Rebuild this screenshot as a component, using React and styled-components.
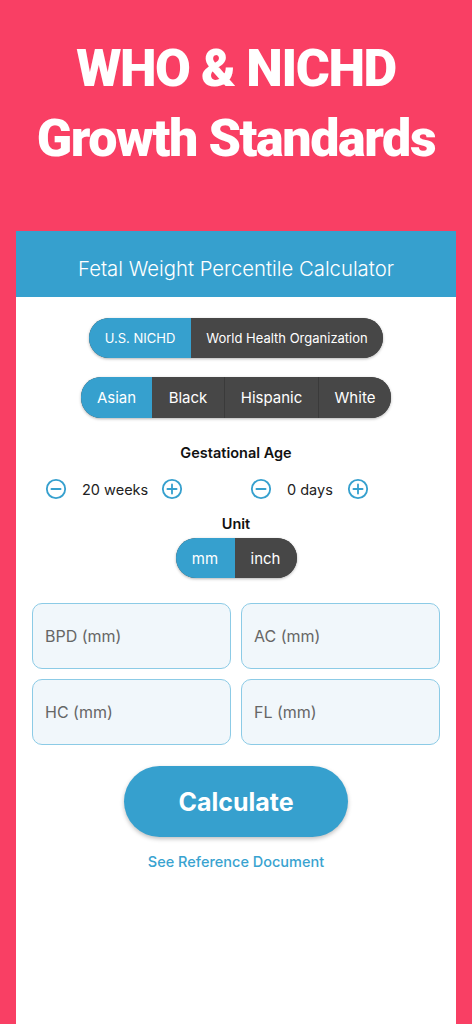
import React from "react";
import styled, { createGlobalStyle } from "styled-components";

const GlobalStyle = createGlobalStyle`
  html, body {
    margin: 0;
    padding: 0;
    background: #f93f64;
  }
  body {
    font-family: Inter, "Noto Sans", sans-serif;
  }
`;

const Page = styled.div`
  min-height: 1024px;
  background: #f93f64;
  display: flex;
  flex-direction: column;
  align-items: center;
  overflow: hidden;
`;

const Hero = styled.h1`
  margin: 34px 0 0;
  height: 197px;
  color: #fff;
  font-family: Roboto, "Liberation Sans", sans-serif;
  font-weight: 900;
  font-size: 52px;
  line-height: 70px;
  letter-spacing: -1.4px;
  text-align: center;
`;

const Card = styled.main`
  width: 440px;
  flex: 1;
  background: #fff;
  display: flex;
  flex-direction: column;
  align-items: center;
`;

const CardHeader = styled.header`
  align-self: stretch;
  box-sizing: border-box;
  height: 66px;
  padding-top: 9px;
  background: #36a0ce;
  color: #fff;
  font-weight: 300;
  font-size: 20.3px;
  display: flex;
  align-items: center;
  justify-content: center;
`;

const Segments = styled.div`
  display: flex;
  height: ${(p) => p.$height || 40}px;
  margin-top: ${(p) => p.$top || 0}px;
  border-radius: 20px;
  overflow: hidden;
  background: #474747;
  box-shadow: 0 1px 3px rgba(0, 0, 0, 0.3);
`;

const Segment = styled.div`
  width: ${(p) => p.$w}px;
  display: flex;
  align-items: center;
  justify-content: center;
  color: #fff;
  font-size: ${(p) => p.$size || 15}px;
  background: ${(p) => (p.$active ? "#36a0ce" : "#474747")};
  border-left: ${(p) => (p.$divider ? "1px solid #3a3a3a" : "none")};
  box-sizing: border-box;
`;

const Label = styled.div`
  margin-top: ${(p) => p.$top}px;
  font-weight: 600;
  font-size: 14.5px;
  color: #111;
  line-height: 18px;
`;

const StepperRow = styled.div`
  align-self: stretch;
  display: flex;
  margin-top: 17px;
  padding-left: 29px;
  gap: 67px;
`;

const Stepper = styled.div`
  display: flex;
  align-items: center;
  gap: 15px;
  height: 20px;
`;

const StepValue = styled.span`
  width: ${(p) => p.$w}px;
  font-size: 14.5px;
  color: #222;
  text-align: center;
  white-space: nowrap;
`;

const IconButton = styled.svg`
  width: 22px;
  height: 22px;
  display: block;
`;

const Fields = styled.div`
  align-self: stretch;
  display: grid;
  grid-template-columns: 1fr 1fr;
  gap: 10px;
  padding: 0 16px;
  margin-top: 25px;
`;

const Field = styled.div`
  height: 66px;
  box-sizing: border-box;
  border: 1px solid #8ccbe6;
  border-radius: 10px;
  background: #f1f7fb;
  display: flex;
  align-items: center;
  padding-left: 12px;
  color: #666;
  font-size: 16px;
`;

const CalcButton = styled.button`
  margin-top: 21px;
  width: 224px;
  height: 71px;
  border: none;
  border-radius: 36px;
  background: #36a0ce;
  color: #fff;
  font-family: Inter, "Noto Sans", sans-serif;
  font-weight: 700;
  font-size: 25px;
  box-shadow: 0 2px 4px rgba(0, 0, 0, 0.25);
`;

const RefLink = styled.a`
  margin-top: 16px;
  color: #39a3d0;
  font-size: 14.5px;
  font-weight: 500;
  text-decoration: none;
`;

const CircleIcon = ({ plus }) => (
  <IconButton viewBox="0 0 24 24" fill="none" stroke="#36a0ce" strokeWidth="2" strokeLinecap="round">
    <circle cx="12" cy="12" r="10" />
    <path d="M7 12h10" />
    {plus && <path d="M12 7v10" />}
  </IconButton>
);

export default function App() {
  return (
    <>
      <GlobalStyle />
      <Page>
        <Hero>
          WHO &amp; NICHD
          <br />
          Growth Standards
        </Hero>
        <Card>
          <CardHeader>Fetal Weight Percentile Calculator</CardHeader>
          <Segments $top={21}>
            <Segment $w={102} $active $size={13}>U.S. NICHD</Segment>
            <Segment $w={192} $size={13}>World Health Organization</Segment>
          </Segments>
          <Segments $top={19} $height={41}>
            <Segment $w={71} $active>Asian</Segment>
            <Segment $w={72}>Black</Segment>
            <Segment $w={94} $divider>Hispanic</Segment>
            <Segment $w={73} $divider>White</Segment>
          </Segments>
          <Label $top={26}>Gestational Age</Label>
          <StepperRow>
            <Stepper>
              <CircleIcon />
              <StepValue $w={64}>20 weeks</StepValue>
              <CircleIcon plus />
            </Stepper>
            <Stepper>
              <CircleIcon />
              <StepValue $w={45}>0 days</StepValue>
              <CircleIcon plus />
            </Stepper>
          </StepperRow>
          <Label $top={16}>Unit</Label>
          <Segments $top={5}>
            <Segment $w={59} $active>mm</Segment>
            <Segment $w={62}>inch</Segment>
          </Segments>
          <Fields>
            <Field>BPD (mm)</Field>
            <Field>AC (mm)</Field>
            <Field>HC (mm)</Field>
            <Field>FL (mm)</Field>
          </Fields>
          <CalcButton>Calculate</CalcButton>
          <RefLink href="#">See Reference Document</RefLink>
        </Card>
      </Page>
    </>
  );
}
